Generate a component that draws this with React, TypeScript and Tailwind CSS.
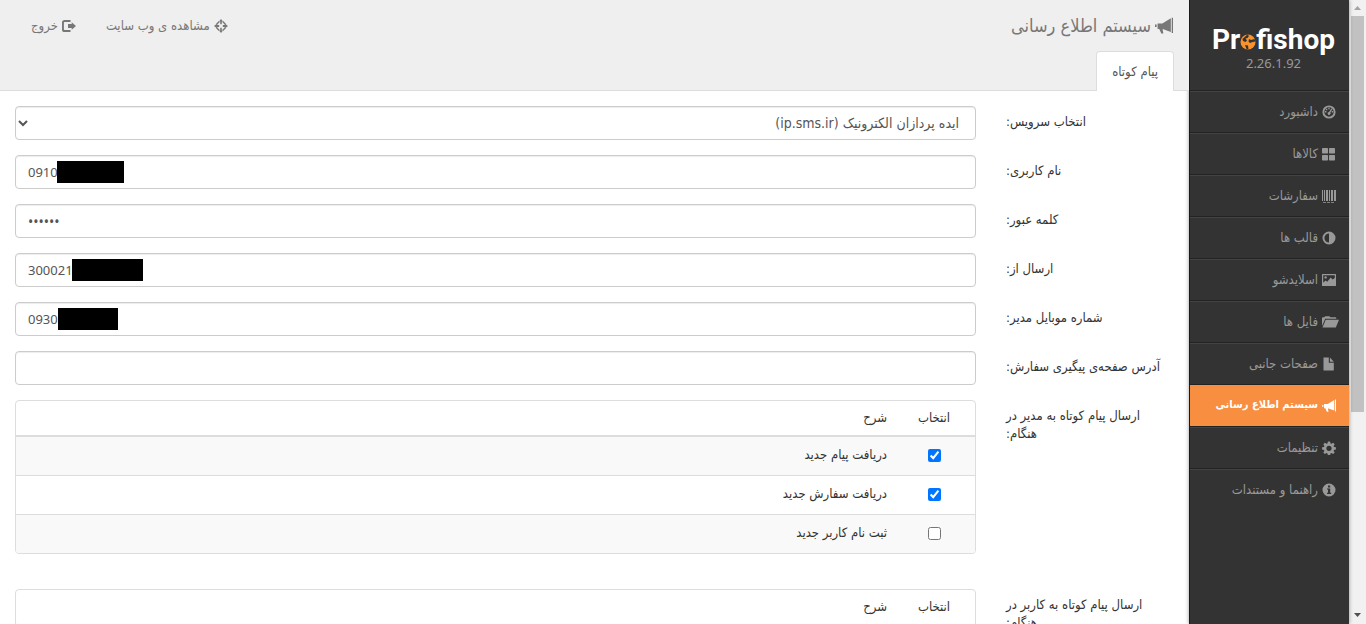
import React from 'react';

type IconProps = { className?: string };

function Icon({ className, children }: IconProps & { children: React.ReactNode }) {
  return (
    <svg viewBox="0 0 14 14" fill="currentColor" aria-hidden="true" className={`shrink-0 ${className ?? 'size-[14px]'}`}>
      {children}
    </svg>
  );
}

const DashboardIcon = () => (
  <Icon>
    <path fillRule="evenodd" d="M7 .4a6.6 6.6 0 1 1 0 13.2A6.6 6.6 0 0 1 7 .4Zm0 1.9a4.7 4.7 0 1 0 0 9.4 4.7 4.7 0 0 0 0-9.4Z" />
    <path d="M6.3 2.8h1.4v1.4H6.3zM3.9 3.8h1.4v1.4H3.9zM9.3 3.4l1.1.6-2 3.6a1.5 1.5 0 1 1-1.4-.7zM2.9 6h1.5v1.4H2.9zM9.7 6h1.4v1.4H9.7z" />
  </Icon>
);

const ThLargeIcon = () => (
  <Icon>
    <rect x="0" y="1" width="6" height="5.5" rx=".7" />
    <rect x="7" y="1" width="6" height="5.5" rx=".7" />
    <rect x="0" y="8" width="6" height="5.5" rx=".7" />
    <rect x="7" y="8" width="6" height="5.5" rx=".7" />
  </Icon>
);

const BarcodeIcon = () => (
  <Icon>
    <path d="M0 1h1v11H0zM2 1h1v11H2zM4 1h2v11H4zM7 1h1v11H7zM9 1h2v11H9zM12 1h2v11h-2zM1 13h3v.8H1zM5 13h3v.8H5zM9 13h3v.8H9z" />
  </Icon>
);

const AdjustIcon = () => (
  <Icon>
    <path fillRule="evenodd" d="M7 .5a6.5 6.5 0 1 1 0 13 6.5 6.5 0 0 1 0-13Zm0 1.9a4.6 4.6 0 0 0 0 9.2Z" />
  </Icon>
);

const PictureIcon = () => (
  <Icon>
    <path
      fillRule="evenodd"
      d="M.6 1h12.8c.4 0 .6.2.6.6v10.8c0 .4-.2.6-.6.6H.6c-.4 0-.6-.2-.6-.6V1.6c0-.4.2-.6.6-.6ZM1.2 2.2v7.6l2.3-2.3 1.7 1.3 3.6-4.3 1.8 2.1 2.2-1.6V2.2Z"
    />
    <circle cx="3.6" cy="4.4" r="1.2" />
  </Icon>
);

const FolderOpenIcon = () => (
  <svg viewBox="0 0 17 14" fill="currentColor" aria-hidden="true" className="h-[14px] w-[17px] shrink-0">
    <path d="M0 11V3.2c0-.5.4-.9.9-.9h1.5l.8-1.1h4.2l.9 1.1h5.1c.5 0 .9.4.9.9v.6H3.2Z" />
    <path d="M3.7 4.7H17L13.8 12.5H.5Z" />
  </svg>
);

const FileIcon = () => (
  <Icon>
    <path d="M1.5.5h5.3v5.2h5v7.2c0 .4-.2.6-.6.6H2.1c-.4 0-.6-.2-.6-.6ZM7.9.5l3.9 4.2H7.9Z" />
  </Icon>
);

const BullhornIcon = ({ className }: IconProps) => (
  <Icon className={className}>
    <path d="M13 .5h1v12h-1zM12.3 1v10.6L6.5 9.5h-.6l.6 3.3H4.9L3.3 9.3H2V5.1h3.7ZM0 5.9h1.3v1.8H0z" />
  </Icon>
);

const CogIcon = () => (
  <Icon>
    <path
      fillRule="evenodd"
      d="M5.9.5h2.2l.4 1.9 1 .4 1.6-1.1 1.6 1.6-1.1 1.6.4 1 1.9.4v2.2l-1.9.4-.4 1 1.1 1.6-1.6 1.6-1.6-1.1-1 .4-.4 1.9H5.9l-.4-1.9-1-.4-1.6 1.1-1.6-1.6 1.1-1.6-.4-1L.1 8.5V6.3L2 5.9l.4-1-1.1-1.6 1.6-1.6 1.6 1.1 1-.4ZM7 4.7a2.6 2.6 0 1 0 0 5.2 2.6 2.6 0 0 0 0-5.2Z"
    />
  </Icon>
);

const InfoIcon = () => (
  <Icon>
    <path fillRule="evenodd" d="M7 .5a6.5 6.5 0 1 1 0 13 6.5 6.5 0 0 1 0-13ZM6 2.5v2h2.2v-2ZM5 5.4v1h1v3.3H5v1.2h4.2V9.7h-1V5.4Z" />
  </Icon>
);

const LogoutIcon = () => (
  <Icon>
    <path d="M8.5 1v1.9H2.9c-.6 0-1 .4-1 1v6.2c0 .6.4 1 1 1h5.6V13H2.6A2.6 2.6 0 0 1 0 10.4V3.6A2.6 2.6 0 0 1 2.6 1ZM9.7 3.2 14 7l-4.3 3.8V9H6V5h3.7Z" />
  </Icon>
);

const ScreenshotIcon = () => (
  <Icon>
    <path d="M7 0 9 2.6H7.8V5.2H6.2V2.6H5ZM7 14 5 11.4h1.2V8.8h1.6v2.6H9ZM0 7l3.2-2.6v1.7h2v1.8h-2v1.7ZM14 7l-3.2 2.6V7.9h-2V6.1h2V4.4Z" />
    <path d="M5.3 2.6 2.6 5.3M8.7 2.6l2.7 2.7M5.3 11.4 2.6 8.7M8.7 11.4l2.7-2.7" stroke="currentColor" strokeWidth="1.4" fill="none" />
  </Icon>
);

const menu = [
  { title: 'داشبورد', icon: <DashboardIcon /> },
  { title: 'کالاها', icon: <ThLargeIcon /> },
  { title: 'سفارشات', icon: <BarcodeIcon /> },
  { title: 'قالب ها', icon: <AdjustIcon /> },
  { title: 'اسلایدشو', icon: <PictureIcon /> },
  { title: 'فایل ها', icon: <FolderOpenIcon /> },
  { title: 'صفحات جانبی', icon: <FileIcon /> },
  { title: 'سیستم اطلاع رسانی', icon: <BullhornIcon />, active: true },
  { title: 'تنظیمات', icon: <CogIcon /> },
  { title: 'راهنما و مستندات', icon: <InfoIcon /> },
];

function Logo() {
  return (
    <div dir="ltr" className="flex h-8 items-center justify-center font-[Roboto,sans-serif] text-[28px] leading-8 font-bold text-white">
      Pr
      <svg viewBox="0 0 16 16" aria-hidden="true" className="mt-1 size-4">
        <circle cx="8" cy="8" r="7.5" fill="#f7922d" />
        <path d="M7.5.5 9 2 7.5 4l-2 .5L7 6.500 5.500 8 3 7l-.5-2ZM9 5l2 1 3.500-1 1 2.500-3 .5L10 9 8.500 7.500ZM5 11l3 .5.5 4-2-.5Z" fill="#333" />
      </svg>
      fishop
    </div>
  );
}

function Sidebar() {
  return (
    <aside className="w-40 shrink-0 border-l border-[#1a1a1a] bg-[#333] text-[#999] shadow-[0_0_4px_rgba(0,0,0,0.4)]">
      <div className="h-[91px] border-b border-[#222] pt-6 pl-2 text-center">
        <Logo />
        <div className="font-['Noto_Sans',sans-serif] text-[13px] leading-[14px]">2.26.1.92</div>
      </div>
      <nav>
        {menu.map((item) => (
          <a
            key={item.title}
            href="#"
            className={
              item.active
                ? 'flex h-[42px] items-center gap-1 border-b border-[#222] bg-[#f88e3f] pr-[13px] text-[11px] font-bold text-white'
                : 'flex h-[42px] items-center gap-1 border-t border-b border-t-[#444] border-b-[#222] pr-[13px] text-[13px] last:border-b-transparent'
            }
          >
            <span className="flex w-[14px] shrink-0 justify-end">{item.icon}</span>
            {item.title}
          </a>
        ))}
      </nav>
    </aside>
  );
}

function Header() {
  return (
    <header className="flex h-[51px] items-center justify-between pr-4 pl-[31px] text-[#777]">
      <h1 className="flex items-center gap-1 text-lg">
        <BullhornIcon className="size-[18px]" />
        سیستم اطلاع رسانی
      </h1>
      <div className="flex gap-[30px] text-[13px]">
        <a href="#" className="flex items-center gap-1">
          <ScreenshotIcon />
          مشاهده ی وب سایت
        </a>
        <a href="#" className="flex items-center gap-1">
          <LogoutIcon />
          خروج
        </a>
      </div>
    </header>
  );
}

interface RowProps {
  label: string;
  htmlFor?: string;
  children: React.ReactNode;
}

function Row({ label, htmlFor, children }: RowProps) {
  return (
    <div className="flex gap-[30px]">
      <label htmlFor={htmlFor} className="w-[168px] shrink-0 pt-[7px] pr-2 text-left text-[13px] leading-[18px] text-[#333]">
        {label}
      </label>
      <div className="min-w-0 flex-1">{children}</div>
    </div>
  );
}

const control =
  'block h-[34px] w-full rounded border border-[#ccc] bg-white px-3 text-[#555] shadow-[inset_0_1px_1px_rgba(0,0,0,0.075)]';

interface FieldProps {
  id: string;
  label: string;
  type?: string;
  value?: string;
  mask?: string;
}

function Field({ id, label, type = 'text', value = '', mask }: FieldProps) {
  return (
    <Row label={label} htmlFor={id}>
      <div className="relative">
        <input
          id={id}
          type={type}
          defaultValue={value}
          dir="ltr"
          className={`${control} font-['Noto_Sans',sans-serif] ${type === 'password' ? 'text-sm' : 'text-[13px]'}`}
        />
        {mask && <span className={`absolute top-[6px] h-[22px] bg-black ${mask}`} />}
      </div>
    </Row>
  );
}

interface EventTableProps {
  name: string;
  rows: { title: string; checked: boolean }[];
}

function EventTable({ name, rows }: EventTableProps) {
  return (
    <div className="overflow-hidden rounded border border-[#ddd]">
      <table className="w-full text-right text-[13px] text-[#333]">
        <thead>
          <tr className="h-[35px] border-b-2 border-[#ddd]">
            <th className="w-[82px] text-center font-normal">انتخاب</th>
            <th className="px-1.5 font-normal">شرح</th>
          </tr>
        </thead>
        <tbody>
          {rows.map((row, i) => (
            <tr key={row.title} className="h-[39px] border-t border-[#ddd] odd:bg-[#f9f9f9]">
              <td>
                <input id={`${name}-${i}`} type="checkbox" defaultChecked={row.checked} className="mx-auto block size-[13px]" />
              </td>
              <td className="px-1.5 pb-0.5">
                <label htmlFor={`${name}-${i}`}>{row.title}</label>
              </td>
            </tr>
          ))}
        </tbody>
      </table>
    </div>
  );
}

const adminEvents = [
  { title: 'دریافت پیام جدید', checked: true },
  { title: 'دریافت سفارش جدید', checked: true },
  { title: 'ثبت نام کاربر جدید', checked: false },
];

function Scrollbar() {
  return (
    <div aria-hidden="true" className="flex w-[17px] shrink-0 flex-col items-center bg-[#f1f1f1]">
      <svg viewBox="0 0 17 16" className="h-4 w-[17px] shrink-0">
        <path d="M5 10h7L8.5 6Z" fill="#a3a3a3" />
      </svg>
      <div className="flex min-h-0 w-[13px] flex-1">
        <div className="h-[67%] w-full bg-[#c1c1c1]" />
      </div>
      <svg viewBox="0 0 17 17" className="size-[17px] shrink-0">
        <path d="M5 6h7l-3.5 4Z" fill="#505050" />
      </svg>
    </div>
  );
}

export default function App() {
  return (
    <div dir="rtl" className="flex h-screen overflow-hidden bg-white font-['DejaVu_Sans_Condensed','DejaVu_Sans',sans-serif]">
      <Scrollbar />
      <Sidebar />
      <main className="min-w-0 flex-1">
        <div className="bg-[#efefef]">
          <Header />
          <div role="tablist" className="flex h-10 items-start border-b border-[#ddd] pr-[15px]">
            <button role="tab" aria-selected="true" className="h-10 rounded-t border border-b-0 border-[#ddd] bg-white px-[15px] text-[13px] text-[#555]">
              پیام کوتاه
            </button>
          </div>
        </div>
        <form className="flex flex-col gap-[15px] px-[15px] pt-[15px]">
          <Row label="انتخاب سرویس:" htmlFor="service">
            <select id="service" className={`${control} text-sm`}>
              <option>ایده پردازان الکترونیک (ip.sms.ir)</option>
            </select>
          </Row>
          <Field id="username" label="نام کاربری:" value="0910" mask="left-[42px] w-[67px]" />
          <Field id="password" label="کلمه عبور:" type="password" value="123456" />
          <Field id="sender" label="ارسال از:" value="300021" mask="left-[57px] w-[71px]" />
          <Field id="mobile" label="شماره موبایل مدیر:" value="0930" mask="left-[43px] w-[60px]" />
          <Field id="tracking" label="آدرس صفحه‌ی پیگیری سفارش:" />
          <Row label="ارسال پیام کوتاه به مدیر در هنگام:">
            <EventTable name="admin" rows={adminEvents} />
          </Row>
          <div className="pt-5">
            <Row label="ارسال پیام کوتاه به کاربر در هنگام:">
              <EventTable name="user" rows={[]} />
            </Row>
          </div>
        </form>
      </main>
    </div>
  );
}
